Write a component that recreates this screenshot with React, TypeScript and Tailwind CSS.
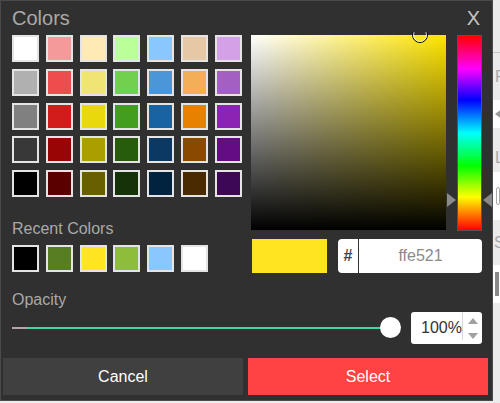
import React from "react";

const grid = [
  ["#ffffff", "#f49a9a", "#ffe9b5", "#bbff99", "#8ac7ff", "#e6c8a4", "#d4a1e6"],
  ["#b0b0b0", "#ee4c4d", "#f0e474", "#72d14c", "#4b96d8", "#f2af58", "#a35fc1"],
  ["#808080", "#d21b1b", "#e8d80c", "#439d1f", "#1963a2", "#e88000", "#8b23b4"],
  ["#383838", "#990505", "#ab9e00", "#275c0c", "#0b3964", "#894a00", "#640c84"],
  ["#000000", "#5b0000", "#686000", "#163209", "#02233f", "#4a2a00", "#3d0856"],
];
const recent = ["#000000", "#577e22", "#ffe521", "#8dbd3a", "#8ac7ff", "#ffffff"];

function Swatch({ c }: { c: string }) {
  return (
    <div
      className="w-[27px] h-[27px] border-2 border-[#e4e4e4] box-border"
      style={{ backgroundColor: c }}
    />
  );
}

export default function App() {
  return (
    <div
      className="relative w-[500px] h-[403px] overflow-hidden bg-[#ebebeb]"
      style={{ fontFamily: '"Liberation Sans", Arial, sans-serif' }}
    >
      {/* background page (partially visible at right) */}
      <div className="flex flex-col w-full h-full pl-[493px] text-[16px] text-[#a8a8a8]">
        <div className="h-[53px] border-b border-[#c4c4c4]" />
        <div className="h-[47px] flex items-center pl-[2px]">Fl</div>
        <div className="h-[28px] bg-white flex items-center pl-[2px]">
          <div className="w-0 h-0 border-y-[6px] border-y-transparent border-r-[8px] border-r-[#9a9a9a]" />
        </div>
        <div className="h-[44px] flex items-end pb-[2px] pl-[2px]">Lo</div>
        <div className="h-[48px] bg-white flex items-center pl-[3px]">
          <div className="w-[6px] h-[18px] border border-[#aaa] rounded-[2px]" />
        </div>
        <div className="h-[45px] flex items-center pl-[1px]">Se</div>
        <div className="h-[38px] bg-white flex items-center pl-[2px]">
          <div className="w-[4px] h-[24px] bg-[#8a8a8a]" />
        </div>
        <div className="flex-1" />
      </div>

      {/* dialog */}
      <div className="absolute left-0 top-0 w-[493px] h-[401px] bg-[#303030] border border-[#4a4a4a] flex flex-col">
        <div className="h-[34px] flex items-start justify-between pl-[11px] pr-[12px] pt-[5px]">
          <span className="text-[20px] leading-[24px] text-[#a9a9a9]">Colors</span>
          <span className="text-[20px] leading-[24px] text-[#c4c4c4]">X</span>
        </div>

        <div className="flex">
          {/* left */}
          <div className="pl-[11px] w-[250px]">
            <div className="grid grid-cols-[repeat(7,27px)] gap-x-[6.8px] gap-y-[6.75px]">
              {grid.flat().map((c, i) => (
                <Swatch key={i} c={c} />
              ))}
            </div>
            <div className="mt-[22px] text-[16px] leading-[20px] text-[#a9a9a9]">Recent Colors</div>
            <div className="mt-[6px] flex gap-x-[6.8px]">
              {recent.map((c, i) => (
                <Swatch key={i} c={c} />
              ))}
            </div>
          </div>

          {/* right */}
          <div className="flex flex-col">
            <div className="flex">
              <div className="relative w-[195px] h-[195px] bg-[#ffe500]">
                <div className="absolute inset-0 bg-linear-to-r from-white to-transparent" />
                <div className="absolute inset-0 bg-linear-to-t from-black to-transparent" />
                <div className="absolute left-[161px] top-[-3px] w-[16px] h-[11px] overflow-hidden">
                  <div className="absolute left-0 top-[-5px] w-[16px] h-[16px] rounded-full border-[1.5px] border-black">
                    <div className="w-full h-full rounded-full border border-white/80" />
                  </div>
                </div>
              </div>
              <div className="relative ml-[11px] w-[25px] h-[196px] border border-[#555]">
                <div className="w-full h-full bg-[linear-gradient(to_bottom,#f00_0%,#f0f_17%,#00f_33%,#0ff_50%,#0f0_67%,#ff0_83%,#f00_100%)]" />
                <div className="absolute left-[-11px] top-[157px] w-0 h-0 border-y-[7px] border-y-transparent border-l-[9px] border-l-[#8a8a8a]" />
                <div className="absolute right-[-11px] top-[157px] w-0 h-0 border-y-[7px] border-y-transparent border-r-[9px] border-r-[#8a8a8a]" />
              </div>
            </div>
            <div className="mt-[8px] flex h-[34px]">
              <div className="ml-[1px] w-[75px] h-full bg-[#ffe521]" />
              <div className="ml-[11px] w-[144px] h-full bg-white rounded-[4px] flex items-center">
                <div className="w-[20px] text-center text-[16px] font-bold text-[#444]">#</div>
                <div className="w-[1px] h-full bg-[#333]" />
                <div className="flex-1 text-center text-[16px] text-[#8a8a8a]">ffe521</div>
              </div>
            </div>
          </div>
        </div>

        <div className="mt-[17px] pl-[11px] text-[16px] leading-[20px] text-[#a9a9a9]">Opacity</div>
        <div className="mt-[2px] flex items-center pl-[11px]">
          <div className="relative w-[389px] h-[32px] flex items-center">
            <div className="w-[15px] h-[2px] bg-[#b8a6a6]" />
            <div className="w-[363px] h-[2px] bg-[#3fd8a3]" />
            <div className="absolute left-[368px] top-[5px] w-[21px] h-[21px] rounded-full bg-white" />
          </div>
          <div className="ml-[10px] w-[71px] h-[32px] bg-white rounded-[3px] flex items-center">
            <div className="flex-1 text-[16px] text-[#333] pl-[10px]">100%</div>
            <div className="w-[1px] h-[28px] bg-[#d8d8d8] self-start" />
            <div className="w-[19px] flex flex-col items-center gap-[9px]">
              <div className="w-0 h-0 border-x-[5px] border-x-transparent border-b-[6px] border-b-[#a0a0a0]" />
              <div className="w-0 h-0 border-x-[5px] border-x-transparent border-t-[6px] border-t-[#a0a0a0]" />
            </div>
          </div>
        </div>

        <div className="mt-[14px] pl-[2px] flex gap-[5px]">
          <div className="w-[240px] h-[37px] bg-[#404040] flex items-center justify-center text-white text-[16px]">
            Cancel
          </div>
          <div className="w-[240px] h-[37px] bg-[#ff4242] flex items-center justify-center text-white text-[16px]">
            Select
          </div>
        </div>
      </div>
    </div>
  );
}
